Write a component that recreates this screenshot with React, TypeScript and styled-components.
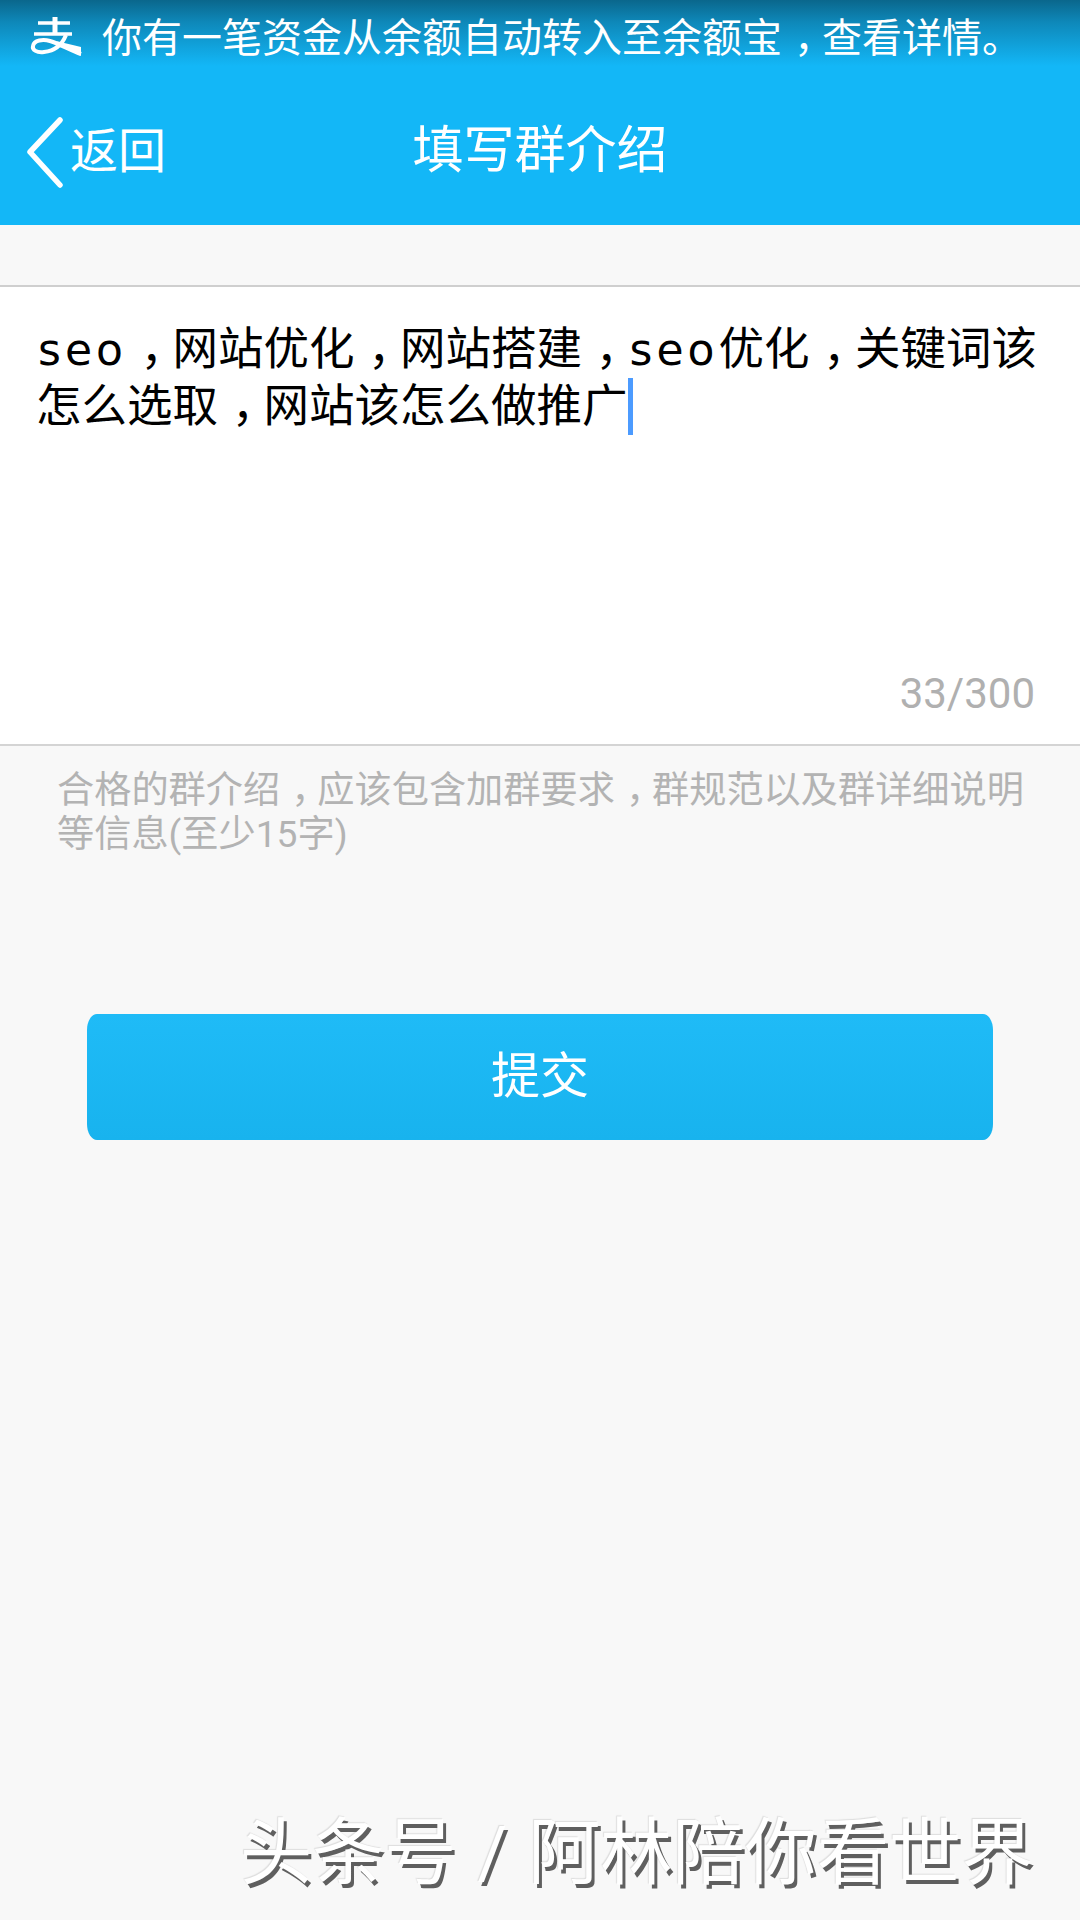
import React from "react";
import styled, { createGlobalStyle } from "styled-components";

const Global = createGlobalStyle`
  html, body { margin: 0; padding: 0; background: #f8f8f8; }
  body { font-family: Roboto, "Noto Sans CJK SC", sans-serif; }
`;

const Page = styled.div`
  position: relative;
  width: 1080px;
  height: 1920px;
  overflow: hidden;
  background: #f8f8f8;
  display: flex;
  flex-direction: column;
`;

const Top = styled.header`
  height: 225px;
  flex-shrink: 0;
  background: linear-gradient(#0a678c 0, #0e88b9 22px, #13b7f7 66px, #13b7f7 100%);
  display: flex;
  flex-direction: column;
`;

const Status = styled.div`
  height: 74px;
  display: flex;
  align-items: center;
  padding-left: 28px;
  gap: 20px;
  color: #fff;
  font-size: 40px;
  white-space: nowrap;
`;

const StatusText = styled.span`
  margin-top: -4px;
`;

const NavBar = styled.div`
  position: relative;
  flex: 1;
  display: flex;
  align-items: center;
  justify-content: center;
  color: #fff;
`;

const Back = styled.div`
  position: absolute;
  left: 26px;
  top: 42px;
  display: flex;
  align-items: center;
  gap: 4px;
  font-size: 48px;
  line-height: 68px;
`;

const Title = styled.div`
  font-size: 51px;
  line-height: 70px;
  margin-top: 3px;
`;

const Editor = styled.section`
  margin-top: 60px;
  height: 457px;
  flex-shrink: 0;
  background: #fff;
  border-top: 2px solid #cfcfcf;
  border-bottom: 2px solid #d4d4d4;
  box-sizing: content-box;
  position: relative;
  padding: 0;
`;

const Content = styled.div`
  padding: 34px 30px 0 36px;
  font-size: 45.5px;
  line-height: 57px;
  color: #000;
`;

const Latin = styled.span`
  padding-left: 2px;
  letter-spacing: 4px;
  font-family: "DejaVu Sans", sans-serif;
  font-size: 44px;
`;

const Comma = styled.span`
  margin-left: 0.3em;
  letter-spacing: -0.3em;
`;

const Caret = styled.span`
  display: inline-block;
  width: 5px;
  height: 57px;
  background: #4c9bff;
  vertical-align: top;
`;

const Counter = styled.div`
  position: absolute;
  right: 45px;
  bottom: 27px;
  font-size: 42px;
  line-height: 46px;
  color: #b0b0b0;
`;

const Hint = styled.p`
  margin: 22px 40px 0 57px;
  font-size: 37.2px;
  line-height: 44px;
  color: #b3b3b3;
`;

const Submit = styled.button`
  margin: 158px 87px 0;
  height: 126px;
  flex-shrink: 0;
  border: 0;
  border-radius: 10px / 16px;
  background: linear-gradient(#1fbbf7, #18b3ee);
  color: #fff;
  font-family: inherit;
  font-size: 49px;
  padding: 0 0 12px;
`;

const Watermark = styled.div`
  position: absolute;
  left: 240px;
  top: 1806px;
  font-size: 72.2px;
  line-height: 96px;
  color: #fff;
  white-space: nowrap;
  word-spacing: 3px;
  text-shadow: 3px 4px 0 #5f5f5f, -1px -1px 1px #ddd;
`;

const AlipayIcon = () => (
  <svg width="54" height="40" viewBox="0 0 54 40" fill="none" stroke="#fff" aria-hidden="true">
    <path d="M10 6h32M6 17h38" strokeWidth="3.5" />
    <path d="M27 0v17" strokeWidth="5" />
    <path d="M38 18c-4 10-12 16-22 17-7 1-12-2-11-6 1-6 10-7 17-5 10 3 20 9 31 13" strokeWidth="4" />
    <path d="M28 24 53 30v9Z" fill="#fff" stroke="none" />
  </svg>
);

const BackIcon = () => (
  <svg width="40" height="72" viewBox="0 0 40 72" fill="none" stroke="#fff" aria-hidden="true">
    <path d="M34 4 4 36l30 33" strokeWidth="5.5" strokeLinecap="round" strokeLinejoin="round" />
  </svg>
);

export default function App() {
  return (
    <Page>
      <Global />
      <Top>
        <Status>
          <AlipayIcon />
          <StatusText>你有一笔资金从余额自动转入至余额宝<Comma>，</Comma>查看详情。</StatusText>
        </Status>
        <NavBar>
          <Back>
            <BackIcon />
            <span>返回</span>
          </Back>
          <Title>填写群介绍</Title>
        </NavBar>
      </Top>
      <Editor>
        <Content>
          <Latin>seo</Latin><Comma>，</Comma>网站优化<Comma>，</Comma>网站搭建<Comma>，</Comma><Latin>seo</Latin>优化<Comma>，</Comma>关键词该怎么选取<Comma>，</Comma>网站该怎么做推广<Caret />
        </Content>
        <Counter>33/300</Counter>
      </Editor>
      <Hint>合格的群介绍<Comma>，</Comma>应该包含加群要求<Comma>，</Comma>群规范以及群详细说明等信息(至少15字)</Hint>
      <Submit>提交</Submit>
      <Watermark>头条号 / 阿林陪你看世界</Watermark>
    </Page>
  );
}
